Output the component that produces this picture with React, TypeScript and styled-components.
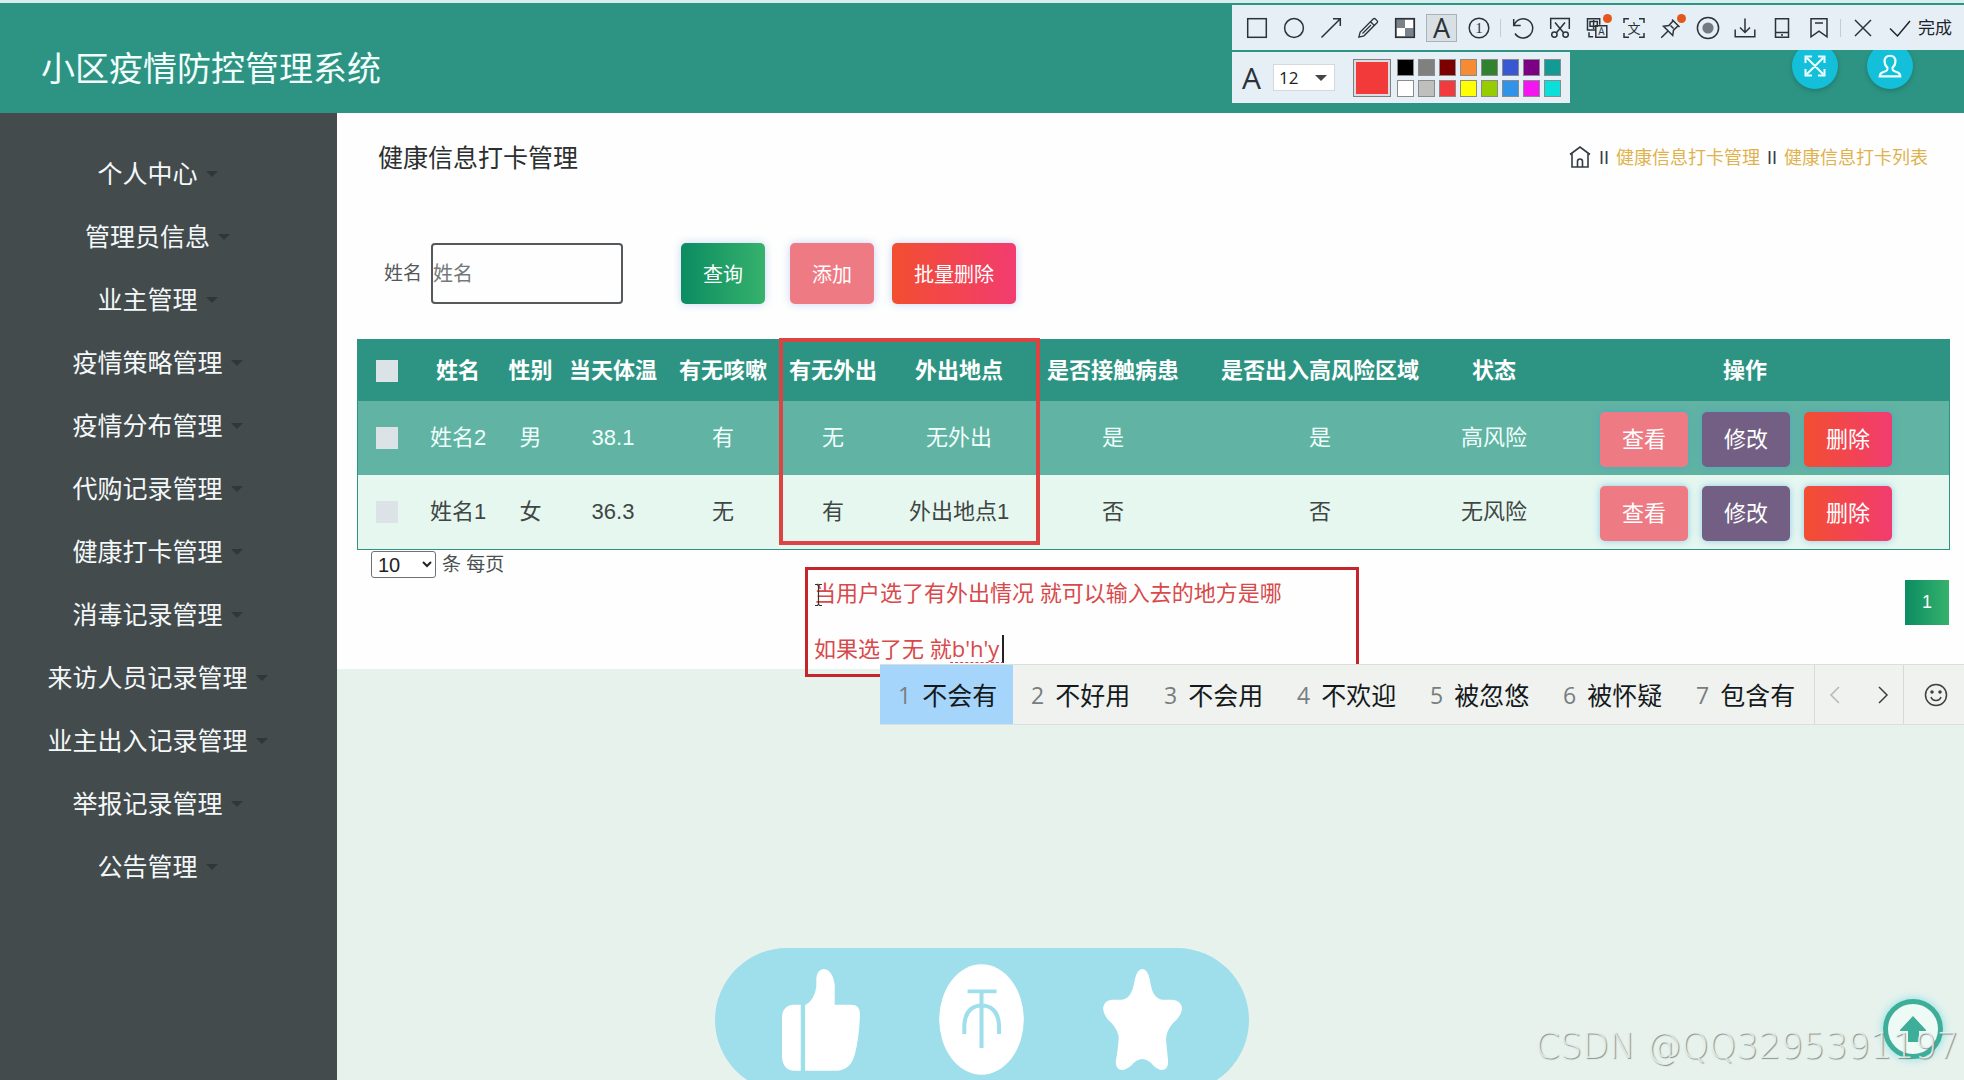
import React from "react";
import styled, { createGlobalStyle, css } from "styled-components";

const FONT = `"Liberation Sans", "Noto Sans CJK SC", sans-serif`;
const UI_FONT = `"Open Sans", "Noto Sans CJK SC", sans-serif`;

const GlobalStyle = createGlobalStyle`
  *, *::before, *::after { box-sizing: border-box; }
  body { margin: 0; font-family: ${FONT}; background: #e7f2ed; overflow: hidden; }
  button, input, select, textarea { font-family: inherit; margin: 0; }
`;

/* ---------- page shell ---------- */

const Page = styled.div`
  position: relative;
  display: flex;
  flex-direction: column;
  min-height: 100vh;
  overflow: hidden;
`;

const Header = styled.header`
  display: flex;
  align-items: center;
  justify-content: space-between;
  height: 113px;
  padding: 20px 51px 0 41px;
  border-top: 3px solid #d6eeee;
  background: #2d9483;
`;

const SiteTitle = styled.h1`
  margin: 0;
  padding-top: 2px;
  font-size: 34px;
  line-height: 48px;
  font-weight: 400;
  color: #f2fffc;
`;

const HeaderActions = styled.div`
  display: flex;
  gap: 29px;
  padding-bottom: 4px;
`;

const RoundButton = styled.button`
  display: flex;
  align-items: center;
  justify-content: center;
  width: 46px;
  height: 46px;
  padding: 0;
  border: 0;
  border-radius: 50%;
  background: #13bfd9;
  color: #f0ffff;
  box-shadow: 0 2px 5px rgba(0, 60, 60, 0.3);
`;

const Body = styled.div`
  display: flex;
  flex: 1;
`;

const Sidebar = styled.nav`
  flex: none;
  width: 337px;
  padding: 29px 22px 0 0;
  background: #434b4d;
`;

const MenuList = styled.ul`
  margin: 0;
  padding: 0;
  list-style: none;
`;

const MenuLink = styled.a`
  display: flex;
  align-items: center;
  justify-content: center;
  gap: 8px;
  height: 63px;
  font-size: 25px;
  line-height: 32px;
  color: #f4f8f8;
  text-decoration: none;

  &::after {
    content: "";
    border: 6px solid transparent;
    border-top-color: #2e3839;
    border-bottom: 0;
  }
`;

const Main = styled.main`
  flex: 1;
  min-width: 0;
`;

const Card = styled.section`
  padding-bottom: 44px;
  background: #fdfefd;
`;

const CardHead = styled.div`
  display: flex;
  align-items: center;
  justify-content: space-between;
  height: 90px;
  padding: 0 36px 0 41px;
`;

const PageTitle = styled.h2`
  margin: 0;
  font-size: 25px;
  line-height: 32px;
  font-weight: 400;
  color: #2c2f30;
`;

const Crumbs = styled.div`
  display: flex;
  align-items: center;
  gap: 7px;
  font-size: 18px;
  line-height: 24px;
  color: #333d45;
`;

const CrumbLink = styled.a`
  color: #dfb24e;
  text-decoration: none;
`;

const SearchForm = styled.form`
  display: flex;
  align-items: center;
  padding: 40px 0 35px 47px;
`;

const FieldLabel = styled.label`
  margin-right: 9px;
  font-size: 19px;
  line-height: 24px;
  color: #55585a;
`;

const NameInput = styled.input`
  width: 192px;
  height: 61px;
  margin-right: 58px;
  padding: 2px 0 0;
  border: 2px solid #55595b;
  border-radius: 4px;
  background: transparent;
  font-size: 20px;

  &::placeholder { color: #75797b; }
`;

type Tone = "green" | "pink" | "red" | "purple";

const fills: Record<Tone, string> = {
  green: "linear-gradient(90deg, #0b8c62, #36b26c)",
  pink: "#ee7b84",
  red: "linear-gradient(90deg, #f24e30, #f23c70)",
  purple: "#735f83",
};

const toneFill = css<{ $tone: Tone }>`
  background: ${(p) => fills[p.$tone]};
  color: #fff;
`;

const FormButton = styled.button<{ $tone: Tone }>`
  ${toneFill}
  height: 61px;
  padding: 0 22px;
  border: 0;
  border-radius: 5px;
  font-size: 20px;
  box-shadow: 0 0 8px rgba(130, 150, 230, 0.4);
`;

const FormButtons = styled.div`
  display: flex;
  gap: 18px;

  & > :first-child { margin-right: 7px; }
`;

/* ---------- table ---------- */

const TableWrap = styled.div`
  padding: 0 14px 0 20px;
`;

const DataTable = styled.table`
  width: 100%;
  table-layout: fixed;
  border-collapse: separate;
  border-spacing: 0;
  border: 1px solid #2d9483;
  border-top: 0;
  font-size: 22px;
  line-height: 30px;
  text-align: center;
  white-space: nowrap;
`;

const Col = styled.col<{ $w?: number }>`
  width: ${(p) => (p.$w ? `${p.$w}px` : "auto")};
`;

const HeadCell = styled.th`
  height: 62px;
  padding: 2px 0 0;
  background: #2d9483;
  color: #fff;
  font-weight: 700;
`;

const Row = styled.tr<{ $active?: boolean }>`
  background: ${(p) => (p.$active ? "#61b3a3" : "#e6f7f0")};
  color: ${(p) => (p.$active ? "#f0fffb" : "#3f4644")};
`;

const Cell = styled.td`
  height: 74px;
  padding: 0;
`;

const Check = styled.input`
  display: block;
  appearance: none;
  width: 22px;
  height: 22px;
  margin: 0 auto;
  background: #dce3e6;
`;

const RowActions = styled.div`
  display: flex;
  justify-content: center;
  gap: 14px;
  padding: 2px 0 0 2px;
`;

const RowButton = styled.button<{ $tone: Tone }>`
  ${toneFill}
  width: 88px;
  height: 55px;
  padding: 0 0 4px;
  border: 0;
  border-radius: 5px;
  font-size: 22px;
  box-shadow: 0 0 7px rgba(60, 160, 220, 0.5);
`;

const TableFoot = styled.div`
  display: flex;
  flex-direction: column;
  gap: 2px;
  padding: 1px 15px 0 34px;
`;

const PageSize = styled.label`
  display: flex;
  align-items: center;
  gap: 6px;
  font-size: 19px;
  line-height: 27px;
  color: #4a4f52;
`;

const SizeSelect = styled.select`
  width: 65px;
  height: 27px;
  padding: 0 2px;
  border: 1px solid #6d7274;
  border-radius: 3px;
  background-color: #fff;
  font-size: 20px;
  color: #222;
`;

const PageButton = styled.button<{ $tone: Tone }>`
  ${toneFill}
  align-self: flex-end;
  width: 44px;
  height: 45px;
  padding: 0;
  border: 0;
  font-size: 18px;
`;

/* ---------- capture tool bars ---------- */

const CaptureTool = styled.div`
  position: absolute;
  top: 5px;
  right: 0;
  display: flex;
  flex-direction: column;
  align-items: flex-start;
  gap: 2px;
  width: 732px;
  font-family: ${UI_FONT};
  color: #2b323a;
`;

const ToolBar = styled.div`
  display: flex;
  align-items: center;
  width: 100%;
  height: 45px;
  padding-left: 6px;
  background: #e6eff6;
`;

const ToolButton = styled.button<{ $active?: boolean }>`
  position: relative;
  display: flex;
  align-items: center;
  justify-content: center;
  flex: none;
  width: 31px;
  height: 28px;
  margin: 0 3px;
  padding: 0;
  border: 1px solid ${(p) => (p.$active ? "#a9b2b8" : "transparent")};
  background: ${(p) => (p.$active ? "#d8e0e4" : "transparent")};
  color: inherit;
`;

const Glyph = styled.span<{ $large?: boolean }>`
  font-family: "Open Sans", sans-serif;
  font-size: ${(p) => (p.$large ? 30 : 27)}px;
  line-height: 26px;
  font-weight: 400;
`;

const Divider = styled.span`
  flex: none;
  width: 1px;
  height: 18px;
  margin: 0 3px;
  background: #c3ccd2;
`;

const DoneButton = styled.button`
  display: flex;
  align-items: center;
  gap: 6px;
  flex: none;
  padding: 0 0 0 7px;
  border: 0;
  background: transparent;
  font-size: 17px;
  line-height: 24px;
  white-space: nowrap;
  color: #1d2329;
`;

const StyleBar = styled.div`
  display: flex;
  align-items: center;
  height: 51px;
  padding: 0 9px 0 10px;
  background: #e6eff6;
`;

const SizeBox = styled.span`
  position: relative;
  display: flex;
  margin: 0 18px 0 12px;

  &::after {
    content: "";
    position: absolute;
    right: 8px;
    top: 11px;
    border: 6px solid transparent;
    border-top-color: #444;
    border-bottom: 0;
    pointer-events: none;
  }
`;

const FontSelect = styled.select`
  appearance: none;
  width: 62px;
  height: 27px;
  padding: 0 5px;
  border: 1px solid #d3dade;
  border-radius: 0;
  background: #fff;
  font-size: 17px;
  color: #222;
`;

const CurrentColour = styled.button`
  width: 38px;
  height: 38px;
  margin-right: 6px;
  padding: 0;
  border: 1px solid #7f7f7f;
  background: #f23a3a;
  box-shadow: inset 0 0 0 2px #d8dde0;
`;

const Palette = styled.div`
  display: grid;
  grid-template-columns: repeat(8, 17px);
  gap: 4px;
`;

const Swatch = styled.button<{ $colour: string }>`
  height: 17px;
  padding: 0;
  border: 1px solid #8b8b8b;
  background: ${(p) => p.$colour};
`;

/* ---------- marks drawn over the page ---------- */

const MarkFrame = styled.div`
  position: absolute;
  top: 338px;
  left: 779px;
  width: 261px;
  height: 207px;
  border: 4px solid #dc4343;
`;

const NoteBox = styled.div`
  position: absolute;
  top: 567px;
  left: 805px;
  width: 554px;
  height: 110px;
  border: 3px solid #c4262b;
`;

const NoteText = styled.textarea`
  display: block;
  width: 100%;
  height: 100%;
  padding: 8px 6px 0;
  border: 0;
  outline: 0;
  resize: none;
  overflow: hidden;
  background: transparent;
  font-family: ${UI_FONT};
  font-size: 22px;
  line-height: 28px;
  color: #d8494b;
`;

const ComposeMark = styled.span`
  position: absolute;
  top: 65px;
  left: 142px;
  width: 54px;
  height: 28px;
  border-right: 2px solid #222;
  border-bottom: 1px dashed #d8494b;
`;

const PointerMark = styled.svg`
  position: absolute;
  top: 13px;
  left: 6px;
`;

const ImeBar = styled.div`
  position: absolute;
  top: 664px;
  left: 880px;
  right: 0;
  display: flex;
  height: 61px;
  overflow: hidden;
  border: 1px solid #d9dfdc;
  border-width: 1px 0;
  background: #eff2ef;
  font-family: ${UI_FONT};
`;

const Candidate = styled.button<{ $active?: boolean }>`
  display: flex;
  align-items: center;
  gap: 11px;
  flex: none;
  width: 133px;
  padding: 0 0 0 18px;
  border: 0;
  background: ${(p) => (p.$active ? "#a6d5fc" : "transparent")};
  font-size: 25px;
  line-height: 32px;
  white-space: nowrap;
  color: #15191b;
`;

const CandidateNo = styled.span`
  font-size: 23px;
  color: #777d80;
`;

const ImeGroup = styled.div`
  display: flex;
  align-items: center;
  justify-content: space-between;
  flex: none;
  width: 89px;
  padding: 0 8px;
  border-left: 1px solid #d3dad7;

  &:first-of-type { margin-left: 3px; }
  &:last-of-type { width: 65px; padding: 0 20px; }
`;

const ImeButton = styled.button`
  display: flex;
  padding: 0;
  border: 0;
  background: transparent;
  color: #3c4042;

  &:disabled { color: #b4b9b8; }
`;

/* ---------- floating pieces ---------- */

const LikePill = styled.div`
  position: absolute;
  bottom: -12px;
  left: 50%;
  display: flex;
  align-items: flex-start;
  justify-content: space-between;
  width: 534px;
  height: 144px;
  margin-left: -267px;
  padding: 16px 67px 0;
  border-radius: 72px;
  background: #9fdeeb;
`;

const PillButton = styled.button`
  display: flex;
  align-items: center;
  height: 111px;
  padding: 0;
  border: 0;
  background: transparent;
`;

const TopButton = styled.button`
  position: absolute;
  right: 21px;
  bottom: 21px;
  display: flex;
  align-items: center;
  justify-content: center;
  width: 60px;
  height: 60px;
  padding: 0;
  border: 5px solid #3fae98;
  border-radius: 50%;
  background: #eefaf6;
  box-shadow: 0 0 8px rgba(80, 215, 225, 0.7);
`;

const Watermark = styled.div`
  position: absolute;
  right: 5px;
  bottom: 13px;
  font-family: "DejaVu Sans", sans-serif;
  font-size: 35px;
  line-height: 42px;
  font-weight: 200;
  white-space: nowrap;
  color: rgba(235, 244, 240, 0.85);
  text-shadow: 1px 1px 1px rgba(110, 120, 118, 0.8);
`;

/* ---------- icons ---------- */

const Icon = ({ children, size = 24, sw = 1.5 }: { children: React.ReactNode; size?: number; sw?: number }) => (
  <svg width={size} height={size} viewBox="0 0 24 24" fill="none" stroke="currentColor" strokeWidth={sw} aria-hidden="true">
    {children}
  </svg>
);

const smallText = { stroke: "none", fill: "currentColor", textAnchor: "middle" as const };

const drawTools: { name: string; art: React.ReactNode }[] = [
  { name: "矩形", art: <rect x="2.7" y="2.7" width="18.6" height="18.6" /> },
  { name: "椭圆", art: <circle cx="12" cy="12" r="9.4" /> },
  { name: "箭头", art: <path d="M2.5 21.5 21.3 2.7M14 2.7h7.3V10" /> },
  { name: "画笔", art: <path d="M2.8 21.2 4.2 16 17.2 3q1.100-1.100 2.200 0l1.600 1.600q1.100 1.100 0 2.200L8 19.800ZM14.500 5.700l3.800 3.800M6.500 17.500 15 9" strokeWidth="1.3" /> },
  {
    name: "马赛克",
    art: (
      <>
        <rect x="2.7" y="2.7" width="18.6" height="18.6" fill="#fff" />
        <path d="M3 3h9v9H3zM12 12h9v9h-9z" fill="#7b828a" stroke="none" />
        <rect x="2.7" y="2.7" width="18.6" height="18.6" />
      </>
    ),
  },
];

const editTools: { name: string; dot?: boolean; art: React.ReactNode }[] = [
  { name: "撤销", art: <path d="M2.7 3v6.6h7M3 9.4A9.6 9.6 0 1 1 4 17.5" /> },
  {
    name: "裁剪",
    art: (
      <>
        <path d="M2.7 13V2.5h18.6V13M7 6.5l8.6 10.2M17 6.5 8.4 16.7" />
        <circle cx="6.4" cy="18.6" r="2.7" />
        <circle cx="17.6" cy="18.6" r="2.7" />
      </>
    ),
  },
  {
    name: "翻译",
    dot: true,
    art: (
      <>
        <path d="M10.5 14H2.5V2.8h12.2v6" />
        <path d="M5 5.6h7.3v4.6H5zM8.6 4v9" />
        <path d="M10.8 9.8h11v11.4h-11z" />
        <text x="16.3" y="19.4" fontSize="10" {...smallText}>A</text>
        <path d="M4 16.2v4.6h4.2" />
      </>
    ),
  },
  {
    name: "识别文字",
    art: (
      <>
        <path d="M2 7V2.7h5M17 2.7h5V7M22 17v4.3h-5M7 21.3H2V17" />
        <text x="12" y="16.6" fontSize="13" {...smallText}>文</text>
      </>
    ),
  },
  { name: "固定", dot: true, art: <path d="M13 3.5 20.5 11M14.2 4.8 9.8 9.5 4.5 10.3l9.2 9.2.8-5.3 4.7-4.4M8.800 15.200 2.200 21.800M11.500 9.500l3 3" /> },
  {
    name: "录制",
    art: (
      <>
        <circle cx="12" cy="12" r="10.6" />
        <circle cx="12" cy="12" r="5.6" fill="#737a81" stroke="none" />
      </>
    ),
  },
  { name: "保存", art: <path d="M2.2 13.5v7.3h19.6v-7.3M12 2.5v14M7 11.5l5 5 5-5" /> },
  { name: "发送到手机", art: <path d="M5.5 2.7h13v18.6h-13zM5.5 16.5h13M11 19h2" /> },
  { name: "收藏", art: <path d="M4 2.7h16v18.1l-8-5.6-8 5.6zM8 7h8" /> },
];

const palette = [
  "#000000", "#808080", "#7d0000", "#f68b33", "#31822f", "#3758d2", "#7b0083", "#129a94",
  "#ffffff", "#bfbfbd", "#f23b3c", "#ffff00", "#97cc00", "#3193e8", "#f416f0", "#0adfda",
];

const RedDot = styled.i`
  position: absolute;
  top: -1px;
  right: -1px;
  width: 9px;
  height: 9px;
  border-radius: 50%;
  background: #e2581c;
`;

/* ---------- data ---------- */

const menu = [
  "个人中心", "管理员信息", "业主管理", "疫情策略管理", "疫情分布管理", "代购记录管理",
  "健康打卡管理", "消毒记录管理", "来访人员记录管理", "业主出入记录管理", "举报记录管理", "公告管理",
];

const columns = [
  { title: "姓名", w: 84 },
  { title: "性别", w: 61 },
  { title: "当天体温", w: 104 },
  { title: "有无咳嗽", w: 116 },
  { title: "有无外出", w: 104 },
  { title: "外出地点", w: 148 },
  { title: "是否接触病患", w: 160 },
  { title: "是否出入高风险区域", w: 254 },
  { title: "状态", w: 94 },
];

const rows = [
  ["姓名2", "男", "38.1", "有", "无", "无外出", "是", "是", "高风险"],
  ["姓名1", "女", "36.3", "无", "有", "外出地点1", "否", "否", "无风险"],
];

const rowActions: { text: string; tone: Tone }[] = [
  { text: "查看", tone: "pink" },
  { text: "修改", tone: "purple" },
  { text: "删除", tone: "red" },
];

const candidates = ["不会有", "不好用", "不会用", "不欢迎", "被忽悠", "被怀疑", "包含有"];

const note = "当用户选了有外出情况 就可以输入去的地方是哪\n\n如果选了无 就b'h'y";

export default function App() {
  return (
    <Page>
      <GlobalStyle />
      <Header>
        <SiteTitle>小区疫情防控管理系统</SiteTitle>
        <HeaderActions>
          <RoundButton type="button" aria-label="全屏">
            <Icon size={24} sw={2}>
              <path d="M4 4l16 16M20 4 4 20M2.5 9V2.5H9M15 2.5h6.5V9M21.5 15v6.5H15M9 21.5H2.5V15" />
            </Icon>
          </RoundButton>
          <RoundButton type="button" aria-label="用户">
            <Icon size={26} sw={2}>
              <path d="M12 2.5c3.2 0 5 2.2 5 5.2 0 2.6-1 4.600-2.600 5.800v1.600c0 1 .6 1.400 1.800 1.800 3 .9 5.300 1.600 5.300 4.600H2.500c0-3 2.300-3.700 5.300-4.600 1.200-.4 1.800-.8 1.800-1.800v-1.600C8 12.300 7 10.300 7 7.700c0-3 1.800-5.200 5-5.200Z" />
            </Icon>
          </RoundButton>
        </HeaderActions>
      </Header>

      <Body>
        <Sidebar>
          <MenuList>
            {menu.map((m) => (
              <li key={m}>
                <MenuLink href="#">{m}</MenuLink>
              </li>
            ))}
          </MenuList>
        </Sidebar>

        <Main>
          <Card>
            <CardHead>
              <PageTitle>健康信息打卡管理</PageTitle>
              <Crumbs>
                <Icon size={24} sw={1.6}>
                  <path d="M2 8.500 12 1l10 7.500M4 7.500V21h16V7.500M9.500 21v-5.500a2.500 2.500 0 0 1 5 0V21" />
                </Icon>
                <span>II</span>
                <CrumbLink href="#">健康信息打卡管理</CrumbLink>
                <span>II</span>
                <CrumbLink href="#">健康信息打卡列表</CrumbLink>
              </Crumbs>
            </CardHead>

            <SearchForm onSubmit={(e) => e.preventDefault()}>
              <FieldLabel htmlFor="name">姓名</FieldLabel>
              <NameInput id="name" placeholder="姓名" />
              <FormButtons>
                <FormButton type="submit" $tone="green">查询</FormButton>
                <FormButton type="button" $tone="pink">添加</FormButton>
                <FormButton type="button" $tone="red">批量删除</FormButton>
              </FormButtons>
            </SearchForm>

            <TableWrap>
              <DataTable>
                <colgroup>
                  <Col $w={58} />
                  {columns.map((c) => (
                    <Col key={c.title} $w={c.w} />
                  ))}
                  <Col />
                </colgroup>
                <thead>
                  <tr>
                    <HeadCell>
                      <Check type="checkbox" aria-label="全选" />
                    </HeadCell>
                    {columns.map((c) => (
                      <HeadCell key={c.title}>{c.title}</HeadCell>
                    ))}
                    <HeadCell>操作</HeadCell>
                  </tr>
                </thead>
                <tbody>
                  {rows.map((r, i) => (
                    <Row key={r[0]} $active={i === 0}>
                      <Cell>
                        <Check type="checkbox" aria-label={r[0]} />
                      </Cell>
                      {r.map((v, k) => (
                        <Cell key={k}>{v}</Cell>
                      ))}
                      <Cell>
                        <RowActions>
                          {rowActions.map((a) => (
                            <RowButton key={a.text} type="button" $tone={a.tone}>{a.text}</RowButton>
                          ))}
                        </RowActions>
                      </Cell>
                    </Row>
                  ))}
                </tbody>
              </DataTable>
            </TableWrap>

            <TableFoot>
              <PageSize>
                <SizeSelect defaultValue="10">
                  <option>10</option>
                  <option>20</option>
                  <option>50</option>
                </SizeSelect>
                条 每页
              </PageSize>
              <PageButton type="button" $tone="green">1</PageButton>
            </TableFoot>
          </Card>
        </Main>
      </Body>

      <CaptureTool>
        <ToolBar>
          {drawTools.map((t) => (
            <ToolButton key={t.name} type="button" aria-label={t.name}>
              <Icon>{t.art}</Icon>
            </ToolButton>
          ))}
          <ToolButton type="button" aria-label="文字" $active>
            <Glyph>A</Glyph>
          </ToolButton>
          <ToolButton type="button" aria-label="序号">
            <Icon>
              <circle cx="12" cy="12" r="9.8" />
              <text x="12" y="17" fontSize="15" fontFamily="Liberation Serif, serif" {...smallText}>1</text>
            </Icon>
          </ToolButton>
          <Divider />
          {editTools.map((t) => (
            <ToolButton key={t.name} type="button" aria-label={t.name}>
              <Icon>{t.art}</Icon>
              {t.dot && <RedDot />}
            </ToolButton>
          ))}
          <Divider />
          <ToolButton type="button" aria-label="关闭">
            <Icon><path d="M4 4l16 16M20 4 4 20" /></Icon>
          </ToolButton>
          <DoneButton type="button">
            <Icon><path d="M2 12.5l7.500 7.500L22 5" /></Icon>
            完成
          </DoneButton>
        </ToolBar>
        <StyleBar>
          <Glyph $large>A</Glyph>
          <SizeBox>
            <FontSelect aria-label="字号" defaultValue="12">
              <option>12</option>
              <option>14</option>
              <option>16</option>
            </FontSelect>
          </SizeBox>
          <CurrentColour type="button" aria-label="当前颜色" />
          <Palette>
            {palette.map((c) => (
              <Swatch key={c} type="button" aria-label={c} $colour={c} />
            ))}
          </Palette>
        </StyleBar>
      </CaptureTool>

      <MarkFrame />

      <NoteBox>
        <NoteText aria-label="标注文字" spellCheck={false} defaultValue={note} />
        <ComposeMark />
        <PointerMark width="9" height="24" viewBox="0 0 9 24" fill="none" stroke="#333" strokeWidth="1.2" aria-hidden="true">
          <path d="M1 1.500h2.500L4.500 3l1-1.500H8M4.500 3v18M1 22.500h2.500l1-1.500 1 1.500H8" />
        </PointerMark>
      </NoteBox>

      <ImeBar>
        {candidates.map((c, i) => (
          <Candidate key={c} type="button" $active={i === 0}>
            <CandidateNo>{i + 1}</CandidateNo>
            {c}
          </Candidate>
        ))}
        <ImeGroup>
          <ImeButton type="button" aria-label="上一页" disabled>
            <Icon><path d="M16 4 8 12l8 8" /></Icon>
          </ImeButton>
          <ImeButton type="button" aria-label="下一页">
            <Icon><path d="M8 4l8 8-8 8" /></Icon>
          </ImeButton>
        </ImeGroup>
        <ImeGroup>
          <ImeButton type="button" aria-label="表情">
            <Icon>
              <circle cx="12" cy="12" r="10.5" />
              <path d="M7 14c1.500 4.500 8.500 4.500 10 0" />
              <circle cx="8" cy="9" r="1" fill="currentColor" />
              <circle cx="16" cy="9" r="1" fill="currentColor" />
            </Icon>
          </ImeButton>
        </ImeGroup>
      </ImeBar>

      <LikePill>
        <PillButton type="button" aria-label="点赞">
          <svg width="78" height="102" viewBox="228 115 216 306" preserveAspectRatio="none" fill="#fff">
            <path d="M280 222V420H262Q230 418 228 378V262Q228 226 258 222Z" />
            <path d="M292 420V224Q318 208 323 168V142Q326 116 344 115Q368 118 374 162V222H420Q444 222 444 250Q442 320 430 370Q418 420 378 420Z" />
          </svg>
        </PillButton>
        <PillButton type="button" aria-label="投币">
          <svg width="85" height="111" viewBox="659 102 235 332" preserveAspectRatio="none" fill="none">
            <ellipse cx="776.5" cy="268" rx="117" ry="165" fill="#fff" />
            <path d="M738 184H818M776.500 184V353M729 311V285Q732 228 777 226Q822 228 825 285V311" stroke="#9fdeeb" strokeWidth="11" />
          </svg>
        </PillButton>
        <PillButton type="button" aria-label="收藏">
          <svg width="79" height="101" viewBox="1111 119 217 302" preserveAspectRatio="none" fill="#fff">
            <path d="M1219 119Q1234 120 1240 152Q1246 208 1274 211H1302Q1328 214 1328 240Q1324 262 1304 280Q1284 305 1284 330L1290 396Q1290 420 1272 421Q1262 420 1250 408Q1219 368 1188 408Q1174 420 1164 421Q1146 420 1146 396Q1152 360 1154 330Q1156 308 1134 280Q1112 260 1111 236Q1114 214 1134 211H1162Q1190 210 1198 152Q1204 120 1219 119Z" />
          </svg>
        </PillButton>
      </LikePill>

      <TopButton type="button" aria-label="回到顶部">
        <svg width="28" height="28" viewBox="0 0 28 28" fill="#3fae98" aria-hidden="true">
          <path d="M14 1 27 15v1h-7v11H9V16H1v-1Z" />
        </svg>
      </TopButton>

      <Watermark>CSDN @QQ3295391197</Watermark>
    </Page>
  );
}
